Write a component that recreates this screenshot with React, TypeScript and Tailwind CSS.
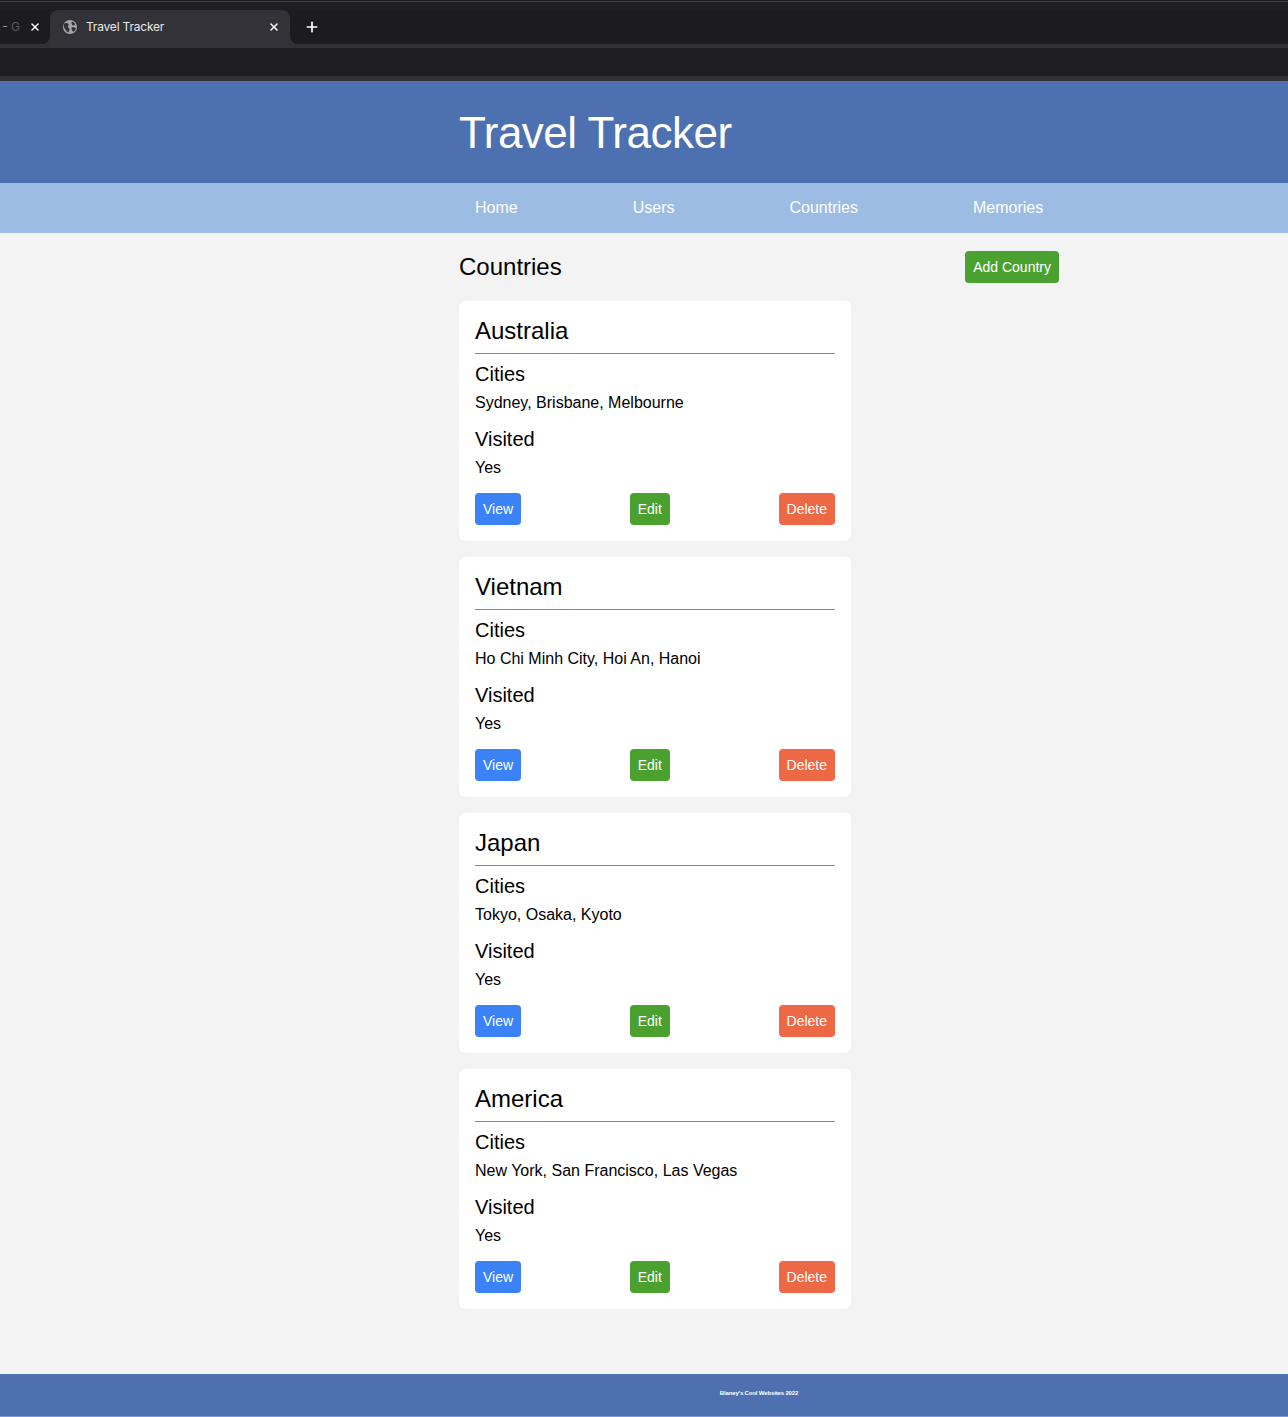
import React from 'react';
import { Plus, X } from 'lucide-react';

const countries = [
  { name: 'Australia', cities: 'Sydney, Brisbane, Melbourne' },
  { name: 'Vietnam', cities: 'Ho Chi Minh City, Hoi An, Hanoi' },
  { name: 'Japan', cities: 'Tokyo, Osaka, Kyoto' },
  { name: 'America', cities: 'New York, San Francisco, Las Vegas' },
];

const navItems = ['Home', 'Users', 'Countries', 'Memories'];

function GlobeIcon() {
  return (
    <svg width="14" height="14" viewBox="0 0 14 14" className="shrink-0">
      <circle cx="7" cy="7" r="7" fill="#a5a6a9" />
      <path d="M1.2 3.6 C3 2.6 5 3 5.6 4.2 C6.2 5.4 4.6 5.8 4.9 7 C5.1 7.9 6.4 8 6.5 9 C6.6 10.2 6 11.6 5.2 12.6 C3.6 11.6 2.4 9.6 1.4 8 C0.8 6.6 0.8 4.8 1.2 3.6 Z" fill="#323238" />
      <path d="M9 1.6 C10.4 2.2 11.4 3 12.2 4 C11.8 5.4 10.6 5.6 9.6 5.2 C8.6 4.8 8.2 3 9 1.6 Z" fill="#323238" />
      <path d="M8.6 7.4 C10 7 11.8 7.4 13 8.2 C12.6 9.6 11.6 11 10.4 11.8 C9 11 8.2 8.8 8.6 7.4 Z" fill="#323238" />
    </svg>
  );
}

function BrowserChrome() {
  return (
    <div className="bg-[#1e1e20] font-['Inter',sans-serif]">
      <div className="h-px bg-[#1a1a1d]" />
      <div className="h-px bg-[#34436f]" />
      <div className="h-2 bg-[#1f1f22]" />
      <div className="flex h-[38px] bg-[#323236]">
        <div className="flex h-[34px] w-[50px] items-center justify-end rounded-br-lg bg-[#1c1c1e] pr-[9px] text-xs">
          <span className="mr-[9px] whitespace-nowrap text-[#9a9a9d]">
            - <span className="text-[#5a5a5d]">G</span>
          </span>
          <X size={12} strokeWidth={3} className="shrink-0 text-white" />
        </div>
        <div className="h-[38px] w-[240px] bg-[#1c1c1e]">
          <div className="flex h-full items-center rounded-t-lg bg-[#323238] pr-[10px] pb-1 pl-[13px]">
            <GlobeIcon />
            <span className="ml-[9px] flex-1 text-xs tracking-[-0.2px] text-[#e8e8ea]">Travel Tracker</span>
            <X size={12} strokeWidth={3} className="text-white" />
          </div>
        </div>
        <div className="flex h-[34px] flex-1 items-center rounded-bl-lg bg-[#1c1c1e] pl-[14px]">
          <Plus size={16} strokeWidth={2.5} className="text-white" />
        </div>
      </div>
      <div className="h-7 bg-[#1e1e20]" />
      <div className="h-[5px] bg-[#323236]" />
    </div>
  );
}

function ActionButton({ label, color }: { label: string; color: string }) {
  return (
    <button className={`flex h-8 items-center rounded px-2 text-sm text-white ${color}`}>{label}</button>
  );
}

function CountryCard({ name, cities }: { name: string; cities: string }) {
  return (
    <div className="h-[240px] w-[392px] rounded-md bg-white px-4 pt-4">
      <h2 className="h-[28px] text-2xl leading-7 text-black">{name}</h2>
      <hr className="mt-2 border-0 border-t border-[#8a8a8a]" />
      <h3 className="mt-2 h-6 text-xl leading-6 text-black">Cities</h3>
      <p className="mt-[5px] h-6 text-base leading-6 text-black">{cities}</p>
      <h3 className="mt-3 h-6 text-xl leading-6 text-black">Visited</h3>
      <p className="mt-[5px] h-6 text-base leading-6 text-black">Yes</p>
      <div className="mt-[13px] flex items-center justify-between">
        <ActionButton label="View" color="bg-[#3b82f6]" />
        <ActionButton label="Edit" color="bg-[#4ba12f]" />
        <ActionButton label="Delete" color="bg-[#ed6845]" />
      </div>
    </div>
  );
}

export default function App() {
  return (
    <div className="flex min-h-[1417px] w-[1288px] flex-col bg-[#f3f3f3] font-['Liberation_Sans',Arial,sans-serif]">
      <BrowserChrome />

      <header className="h-[102px] bg-[#4d70b0] pl-[459px]">
        <h1 className="pt-[25px] text-[44px] leading-[54px] tracking-[-0.5px] text-white">Travel Tracker</h1>
      </header>

      <nav className="flex h-[50px] items-center gap-[115px] bg-[#9dbce4] pl-[475px] text-base text-white">
        {navItems.map((item) => (
          <a key={item}>{item}</a>
        ))}
      </nav>

      <main className="flex-1 pl-[459px]">
        <div className="flex h-[68px] w-[600px] items-center justify-between">
          <h2 className="text-2xl text-black">Countries</h2>
          <ActionButton label="Add Country" color="bg-[#4ba12f]" />
        </div>
        <div className="flex flex-col gap-4">
          {countries.map((c) => (
            <CountryCard key={c.name} name={c.name} cities={c.cities} />
          ))}
        </div>
      </main>

      <footer className="flex h-[42px] items-center justify-center bg-[#4d70b0] pb-1 pl-[230px] text-[6px] font-bold tracking-[-0.15px] text-white">
        Blaney's Cool Websites 2022
      </footer>
      <div className="h-px bg-[#7f9ad0]" />
    </div>
  );
}
